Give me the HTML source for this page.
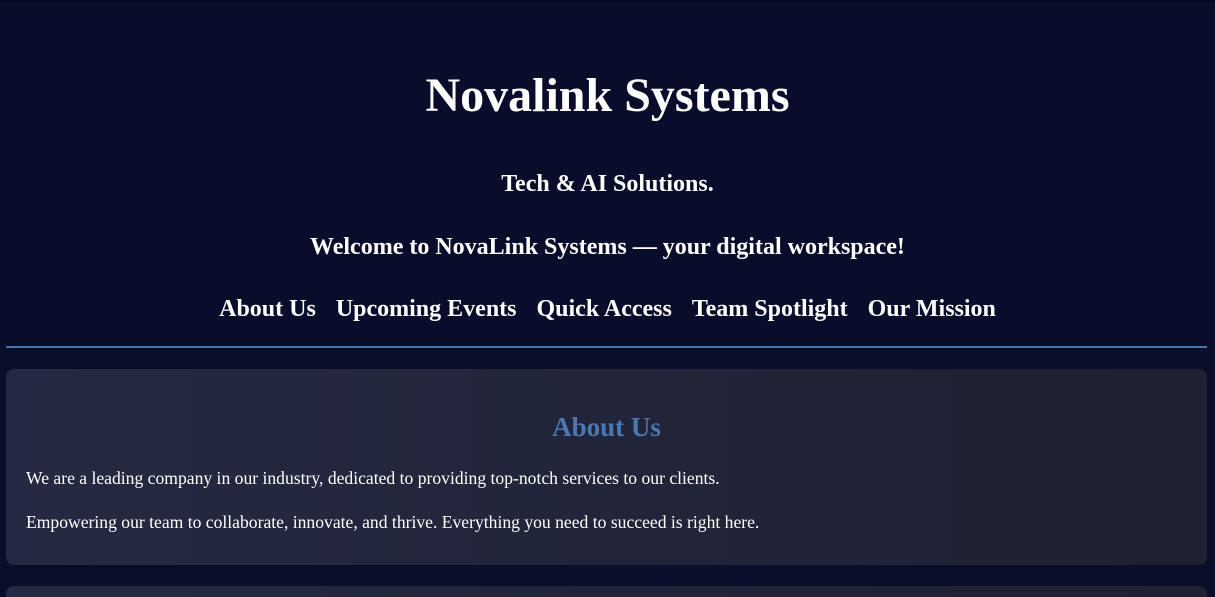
<!DOCTYPE html>
<html><head><style>
html,body{margin:0;padding:0;width:1215px;height:597px;overflow:hidden;}
body{background:#0a0e2a;font-family:"Liberation Serif",serif;color:#fff;position:relative;}
.hdr{position:absolute;left:0;top:0;width:1215px;height:349px;background:#080d2b;border-top:3px solid #070a20;box-sizing:border-box;}
.t{position:absolute;width:100%;text-align:center;font-weight:bold;}
.line{position:absolute;left:6px;top:346px;width:1201px;height:2px;background:#4a74aa;}
.card{position:absolute;left:6px;width:1201px;border-radius:8px;background:linear-gradient(90deg,#252a42,#1f2031);}
p{position:absolute;left:20px;margin:0;font-size:17.6px;white-space:nowrap;}
.nav{position:absolute;top:296px;width:100%;display:flex;justify-content:center;gap:20px;font-weight:bold;font-size:24px;}
</style></head><body>
<div class="hdr"></div>
<div class="t" style="top:68px;font-size:48px;">Novalink Systems</div>
<div class="t" style="top:171px;font-size:24px;">Tech &amp; AI Solutions.</div>
<div class="t" style="top:234px;font-size:24px;">Welcome to NovaLink Systems — your digital workspace!</div>
<div class="nav"><span>About Us</span><span>Upcoming Events</span><span>Quick Access</span><span>Team Spotlight</span><span>Our Mission</span></div>
<div class="line"></div>
<div class="card" style="top:369px;height:196px;">
<div class="t" style="top:43px;font-size:27px;color:#4a78b2;">About Us</div>
<p style="top:99px;">We are a leading company in our industry, dedicated to providing top-notch services to our clients.</p>
<p style="top:143px;">Empowering our team to collaborate, innovate, and thrive. Everything you need to succeed is right here.</p>
</div>
<div class="card" style="top:586px;height:11px;border-radius:8px 8px 0 0;"></div>
</body></html>
